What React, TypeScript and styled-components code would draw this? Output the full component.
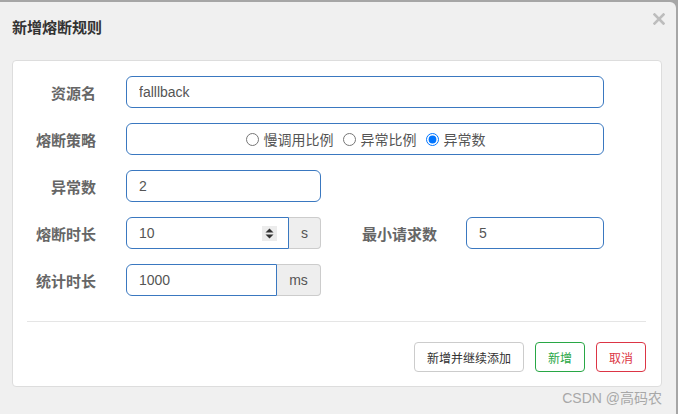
import React from 'react';
import styled, { createGlobalStyle } from 'styled-components';

const Global = createGlobalStyle`
  html, body { margin: 0; padding: 0; background: #a6a6a6; }
  body { font-family: "Liberation Sans", "Noto Sans CJK SC", sans-serif; }
  * { box-sizing: border-box; }
`;

const Modal = styled.div`
  margin-top: 2px;
  width: 676px;
  height: 412px;
  background: #f0f0f0;
  border-top-right-radius: 6px;
  display: flex;
  flex-direction: column;
`;

const Header = styled.div`
  height: 58px;
  display: flex;
  align-items: flex-start;
  justify-content: space-between;
  padding: 11px 11px 0 12px;
`;

const Title = styled.div`
  margin-top: 6px;
  line-height: 18px;
  font-size: 15px;
  font-weight: 700;
  color: #333;
`;

const Close = styled.div`
  width: 12px;
  height: 12px;
  display: flex;
`;

const Panel = styled.div`
  margin: 0 14px 0 12px;
  height: 327px;
  background: #fff;
  border: 1px solid #ddd;
  border-radius: 4px;
  padding-top: 15px;
  display: flex;
  flex-direction: column;
`;

const Rows = styled.div`
  display: flex;
  flex-direction: column;
  gap: 15px;
`;

const Row = styled.div`
  display: flex;
  align-items: center;
  height: 32px;
`;

const Label = styled.div<{ $w?: number; $ml?: number; $mr?: number }>`
  width: ${p => p.$w ?? 83}px;
  margin-left: ${p => p.$ml ?? 0}px;
  margin-right: ${p => p.$mr ?? 30}px;
  text-align: right;
  font-size: 15px;
  font-weight: 700;
  color: #666;
  white-space: nowrap;
`;

const Field = styled.div<{ $w: number; $group?: boolean }>`
  width: ${p => p.$w}px;
  height: 32px;
  border: 1px solid #3a78c0;
  border-radius: ${p => (p.$group ? '6px 0 0 6px' : '6px')};
  display: flex;
  align-items: center;
  padding: 0 11px 0 12px;
  background: #fff;
`;

const TextInput = styled.input`
  flex: 1;
  min-width: 0;
  border: none;
  outline: none;
  padding: 0;
  background: transparent;
  font-family: "Liberation Sans", "Noto Sans CJK SC", sans-serif;
  font-size: 14px;
  color: #555;
`;

const Group = styled.div`
  display: flex;
`;

const Addon = styled.div<{ $w: number }>`
  width: ${p => p.$w}px;
  height: 32px;
  background: #eee;
  border: 1px solid #ccc;
  border-left: none;
  border-radius: 0 4px 4px 0;
  display: flex;
  align-items: center;
  justify-content: center;
  font-size: 14px;
  color: #555;
`;

const Spin = styled.div`
  width: 15px;
  height: 15px;
  background: #ececec;
  display: flex;
  align-items: center;
  justify-content: center;
`;

const RadioBox = styled.div`
  width: 478px;
  height: 32px;
  border: 1px solid #3a78c0;
  border-radius: 6px;
  display: flex;
  align-items: center;
  justify-content: center;
  gap: 9px;
  padding-left: 1px;
`;

const RadioItem = styled.label`
  display: flex;
  align-items: center;
  gap: 5px;
  font-size: 14px;
  color: #555;
`;

const Radio = styled.input`
  margin: 0;
  width: 13px;
  height: 13px;
`;

const Divider = styled.div`
  height: 1px;
  background: #e5e5e5;
  margin: 25px 15px 0 14px;
`;

const Buttons = styled.div`
  display: flex;
  justify-content: flex-end;
  gap: 11px;
  margin-top: 20px;
  padding-right: 15px;
`;

const Btn = styled.button<{ $tone: 'default' | 'success' | 'danger' }>`
  height: 30px;
  padding: 0 12px;
  background: #fff;
  border-radius: 4px;
  font-family: "Liberation Sans", "Noto Sans CJK SC", sans-serif;
  font-size: 12px;
  border: 1px solid
    ${p => (p.$tone === 'success' ? '#28a745' : p.$tone === 'danger' ? '#dc3545' : '#ccc')};
  color: ${p => (p.$tone === 'success' ? '#28a745' : p.$tone === 'danger' ? '#dc3545' : '#333')};
`;

const Footer = styled.div`
  flex: 1;
  display: flex;
  justify-content: flex-end;
  align-items: flex-start;
  padding: 2px 14px 0 0;
  font-size: 14px;
  line-height: 18px;
  color: #a8a8a8;
`;

export default function App() {
  return (
    <>
      <Global />
      <Modal>
        <Header>
          <Title>新增熔断规则</Title>
          <Close>
            <svg width="12" height="12" viewBox="0 0 12 12">
              <path d="M1.5 1.5 L10.5 10.5 M10.5 1.5 L1.5 10.5" stroke="#bdbdbd" strokeWidth="2.6" strokeLinecap="square" />
            </svg>
          </Close>
        </Header>
        <Panel>
          <Rows>
            <Row>
              <Label>资源名</Label>
              <Field $w={478}>
                <TextInput defaultValue="falllback" />
              </Field>
            </Row>
            <Row>
              <Label>熔断策略</Label>
              <RadioBox>
                <RadioItem>
                  <Radio type="radio" name="grade" />
                  慢调用比例
                </RadioItem>
                <RadioItem>
                  <Radio type="radio" name="grade" />
                  异常比例
                </RadioItem>
                <RadioItem>
                  <Radio type="radio" name="grade" defaultChecked />
                  异常数
                </RadioItem>
              </RadioBox>
            </Row>
            <Row>
              <Label>异常数</Label>
              <Field $w={195}>
                <TextInput defaultValue="2" />
              </Field>
            </Row>
            <Row>
              <Label>熔断时长</Label>
              <Group>
                <Field $w={163} $group>
                  <TextInput defaultValue="10" />
                  <Spin>
                    <svg width="9" height="11" viewBox="0 0 9 11">
                      <path d="M4.5 0.5 L8.5 4.5 L0.5 4.5 Z" fill="#333" />
                      <path d="M0.5 6.5 L8.5 6.5 L4.5 10.5 Z" fill="#333" />
                    </svg>
                  </Spin>
                </Field>
                <Addon $w={32}>s</Addon>
              </Group>
              <Label $w={77} $ml={39} $mr={29}>最小请求数</Label>
              <Field $w={138}>
                <TextInput defaultValue="5" />
              </Field>
            </Row>
            <Row>
              <Label>统计时长</Label>
              <Group>
                <Field $w={151} $group>
                  <TextInput defaultValue="1000" />
                </Field>
                <Addon $w={44}>ms</Addon>
              </Group>
            </Row>
          </Rows>
          <Divider />
          <Buttons>
            <Btn $tone="default">新增并继续添加</Btn>
            <Btn $tone="success">新增</Btn>
            <Btn $tone="danger">取消</Btn>
          </Buttons>
        </Panel>
        <Footer>CSDN @高码农</Footer>
      </Modal>
    </>
  );
}
